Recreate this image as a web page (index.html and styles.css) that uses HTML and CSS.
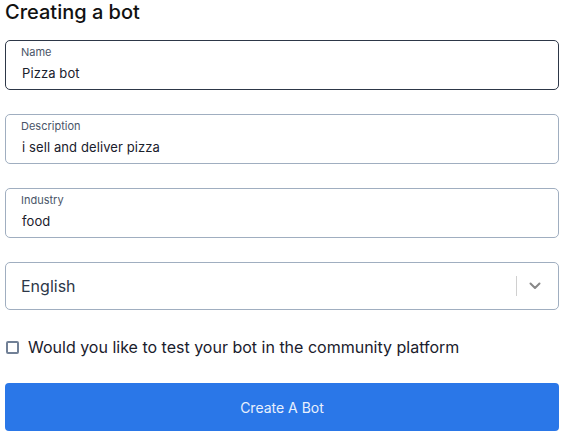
FILE: index.html
```html
<!DOCTYPE html>
<html>
<head>
<meta charset="utf-8">
<link rel="stylesheet" href="styles.css">
</head>
<body>
<div class="page">
  <h1 class="title">Creating a bot</h1>
  <form class="form">
    <div class="field field-focus">
      <span class="field-label">Name</span>
      <span class="field-value">Pizza bot</span>
    </div>
    <div class="field">
      <span class="field-label">Description</span>
      <span class="field-value">i sell and deliver pizza</span>
    </div>
    <div class="field">
      <span class="field-label">Industry</span>
      <span class="field-value">food</span>
    </div>
    <div class="select">
      <span class="select-value">English</span>
      <span class="select-sep"></span>
      <svg class="select-chevron" width="12" height="8" viewBox="0 0 12 8"><path d="M1.5 1.5 L6 6 L10.5 1.5" fill="none" stroke="#888" stroke-width="2" stroke-linecap="round" stroke-linejoin="round"/></svg>
    </div>
    <label class="check">
      <span class="check-box"></span>
      <span class="check-text">Would you like to test your bot in the community platform</span>
    </label>
    <button type="button" class="submit">Create A Bot</button>
  </form>
</div>
</body>
</html>
```
FILE: styles.css
```css
html, body {
  margin: 0;
  padding: 0;
  background: #fff;
}
body {
  font-family: Inter, "Noto Sans", sans-serif;
  color: #1a202c;
}
.page {
  width: 554px;
  padding-left: 5px;
}
.title {
  margin: 0;
  font-size: 20px;
  line-height: 24px;
  font-weight: 500;
  color: #111;
}
.form {
  margin-top: 16px;
  display: flex;
  flex-direction: column;
}
.field {
  box-sizing: border-box;
  height: 50px;
  border: 1px solid #a0aec0;
  border-radius: 5px;
  padding: 4px 15px 0;
  display: flex;
  flex-direction: column;
  margin-bottom: 24px;
}
.field-focus {
  border-color: #2d3748;
}
.field-label {
  font-size: 11px;
  line-height: 14px;
  color: #4a5568;
}
.field-value {
  margin-top: 5px;
  font-size: 13px;
  line-height: 18px;
  letter-spacing: 0.1px;
  color: #1a202c;
  padding-left: 1px;
}
.select {
  box-sizing: border-box;
  height: 48px;
  border: 1px solid #a0aec0;
  border-radius: 5px;
  display: flex;
  align-items: center;
  padding-left: 15px;
  padding-right: 17px;
}
.select-value {
  flex: 1;
  font-size: 16px;
  color: #2d3748;
}
.select-sep {
  width: 1px;
  height: 20px;
  background: #d0d0d0;
  margin-right: 12px;
}
.select-chevron {
  display: block;
}
.check {
  display: flex;
  align-items: center;
  margin-top: 28px;
  height: 18px;
  padding-left: 1px;
}
.check-box {
  box-sizing: border-box;
  width: 13px;
  height: 13px;
  border: 2px solid #718096;
  border-radius: 2px;
  margin-right: 9px;
}
.check-text {
  font-size: 16px;
  line-height: 18px;
  color: #1a202c;
}
.submit {
  margin-top: 27px;
  height: 48px;
  border: 0;
  border-radius: 4px;
  background: #2a77e8;
  color: #e8f0fd;
  font-family: Inter, "Noto Sans", sans-serif;
  font-size: 14px;
  cursor: pointer;
}
```
